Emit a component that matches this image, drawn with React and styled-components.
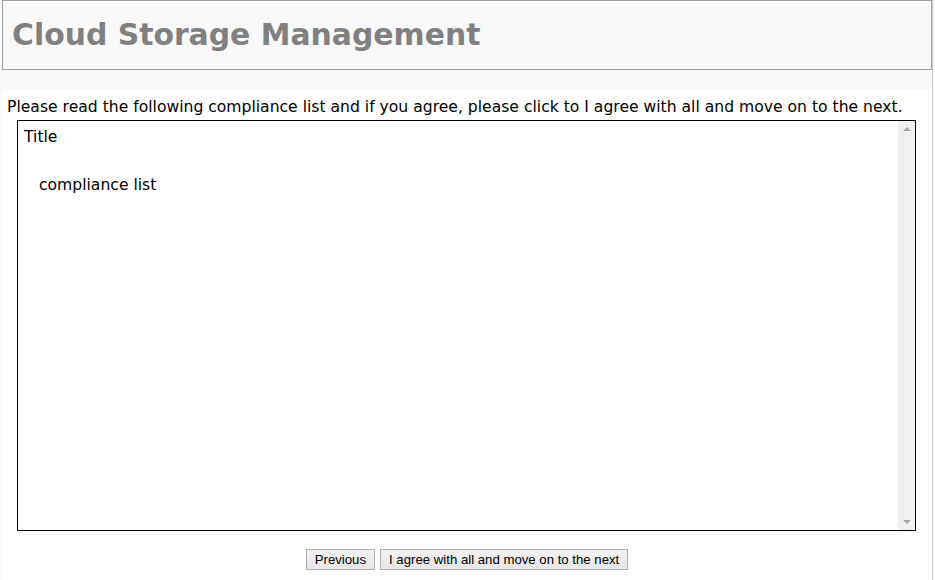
import styled, { createGlobalStyle } from "styled-components"

const GlobalStyle = createGlobalStyle`
    html, body {
        margin: 0;
        padding: 0;
        background: #fafafa;
    }
    body {
        font-family: "DejaVu Sans", Verdana, sans-serif;
        color: #000;
    }
`

const Page = styled.div`
    width: 930px;
    margin-left: 2px;
    min-height: 580px;
    border-right: 1px solid #c8c8c8;
`
const Header = styled.div`
    height: 68px;
    border: 1px solid #a0a0a0;
    background-color: #f9f9f9;
    display: flex;
    align-items: center;
    padding-left: 9px;
`
const Title = styled.h1`
    margin: 0 0 2px;
    font-size: 29.85px;
    font-weight: bold;
    color: #808080;
`
const Content = styled.div`
    margin-top: 20px;
    background: #fff;
    padding: 7px 0 20px 5px;
    min-height: 470px;
`
const Intro = styled.p`
    margin: 0 0 3px;
    font-size: 15.6px;
    line-height: 20px;
`
const Box = styled.div`
    margin-left: 10px;
    width: 897px;
    height: 409px;
    border: 1px solid #000;
    display: flex;
`
const BoxText = styled.div`
    flex: 1;
    padding: 6px 6px;
    font-size: 15.6px;
    line-height: 20px;
`
const Heading = styled.div`
    margin-bottom: 28px;
`
const Item = styled.div`
    padding-left: 15px;
`
const ScrollBar = styled.div`
    width: 17px;
    background: #f0f0f0;
    display: flex;
    flex-direction: column;
    justify-content: space-between;
    align-items: center;
    padding: 6px 0;
`
const Arrow = styled.span`
    width: 0;
    height: 0;
    border-left: 4px solid transparent;
    border-right: 4px solid transparent;
    ${(p) => p.down
        ? "border-top: 4px solid #a3a3a3;"
        : "border-bottom: 4px solid #a3a3a3;"}
`
const Buttons = styled.div`
    display: flex;
    justify-content: center;
    gap: 5px;
    margin-top: 18px;
    padding-right: 5px;
`
const Button = styled.button`
    font-family: Arial, "Liberation Sans", sans-serif;
    font-size: 13.2px;
    height: 21px;
    padding: 0 8px;
    border: 1px solid #adadad;
    border-radius: 0;
    background: linear-gradient(#f2f2f2, #e6e6e6);
    color: #000;
    cursor: pointer;
`

export default function App() {
    return (
        <>
            <GlobalStyle />
            <Page>
                <Header>
                    <Title>Cloud Storage Management</Title>
                </Header>
                <Content>
                    <Intro>Please read the following compliance list and if you agree, please click to I agree with all and move on to the next.</Intro>
                    <Box>
                        <BoxText>
                            <Heading>Title</Heading>
                            <Item>compliance list</Item>
                        </BoxText>
                        <ScrollBar>
                            <Arrow />
                            <Arrow down />
                        </ScrollBar>
                    </Box>
                    <Buttons>
                        <Button>Previous</Button>
                        <Button>I agree with all and move on to the next</Button>
                    </Buttons>
                </Content>
            </Page>
        </>
    )
}
